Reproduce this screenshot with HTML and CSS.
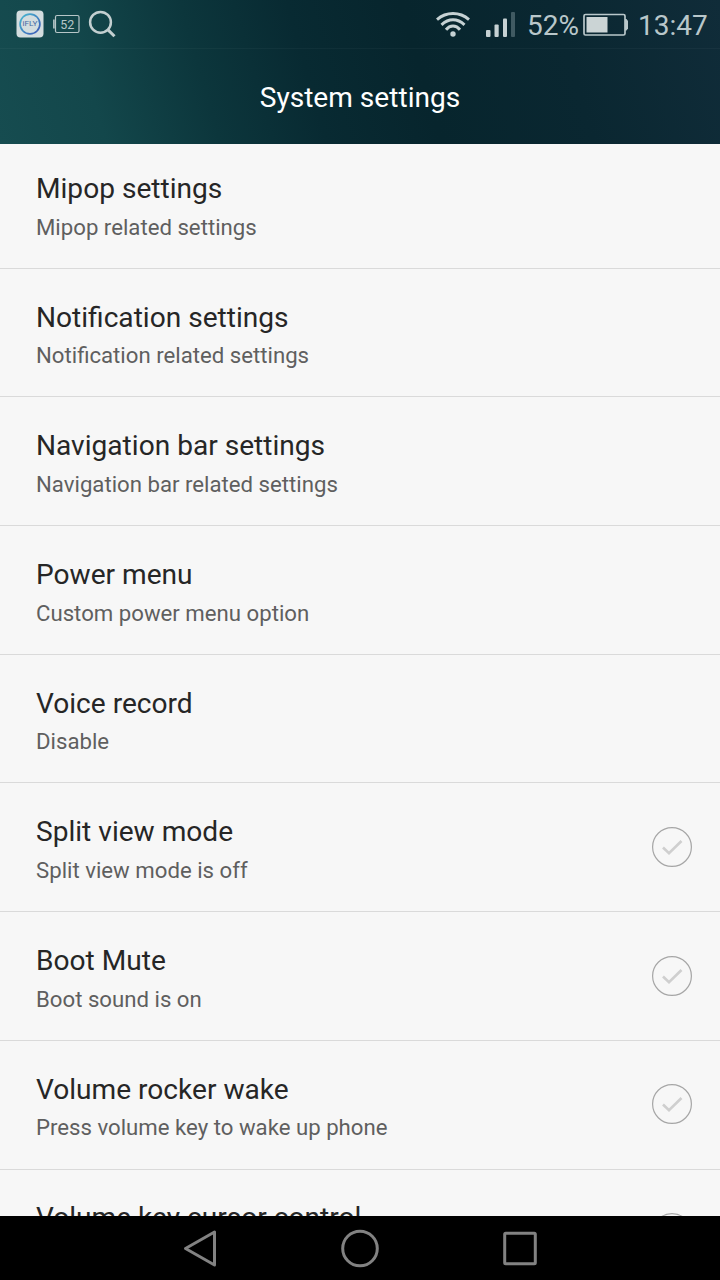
FILE: index.html
```html
<!DOCTYPE html>
<html lang="en">
<head>
<meta charset="utf-8">
<title>System settings</title>
<link rel="stylesheet" href="styles.css">
</head>
<body>
<div class="screen">
  <header class="header">
    <div class="status">
      <div class="notifications">
        <svg class="ifly" width="28" height="28" viewBox="0 0 28 28"><defs><linearGradient id="ring" x2="1" y2="1"><stop stop-color="#47b9d0"/><stop offset="1" stop-color="#3b56b5"/></linearGradient></defs><rect x=".5" y=".5" width="27" height="27" rx="4" fill="#d3dddf"/><circle cx="14" cy="14" r="9.9" fill="none" stroke="url(#ring)" stroke-width="1.7"/><text x="14" y="16.4" text-anchor="middle" textLength="15" lengthAdjust="spacingAndGlyphs" class="ifly-text">iFLY</text></svg>
        <svg class="level" width="28" height="20" viewBox="0 0 28 20"><path d="M4 1.5H24.5Q26 1.5 26 3V17Q26 18.500 24.500 18.500H4Q2.500 18.500 2.500 17V3Q2.500 1.500 4 1.500Z" fill="none" stroke="#b7c6c8" stroke-width="1.2"/><path d="M.9 5.500V14.500" stroke="#b7c6c8" stroke-width="1.600"/><text x="14.300" y="15" text-anchor="middle" class="level-text">52</text></svg>
        <svg class="search" width="28" height="28" viewBox="0 0 28 28" fill="none" stroke="#c3cfd0"><circle cx="12.500" cy="12.300" r="10.400" stroke-width="2.500"/><path d="M19.800 19.600L26.500 26.300" stroke-width="3"/></svg>
      </div>
      <div class="system">
        <svg class="wifi" width="34" height="26" viewBox="0 0 34 26" fill="none" stroke="#c6d1d3" stroke-width="3"><path d="M1 7.600Q8 1.600 17 1.600T33 7.600"/><path d="M5.500 12.800Q11 7.800 17 7.800T28.500 12.800"/><path d="M10 17.700Q13 14 17 14T24 17.700"/><circle cx="17" cy="22" r="2.700" fill="#c6d1d3" stroke="none"/></svg>
        <svg class="signal" width="30" height="26" viewBox="0 0 30 26" fill="#c6d1d3"><rect x="0" y="18" width="4.500" height="7" rx="1"/><rect x="8.500" y="12.500" width="4.200" height="12.500" rx="1"/><rect x="17" y="6.500" width="4" height="18.500" rx="1"/><rect x="25" y="0" width="4" height="25" rx="1" fill="#405a62"/></svg>
        <span class="percent">52%</span>
        <svg class="battery" width="46" height="24" viewBox="0 0 46 24"><rect x="1" y="1.500" width="41" height="20.500" rx="1.500" fill="none" stroke="#b9c7ca" stroke-width="1.700"/><rect x="3.500" y="4" width="21" height="15.500" fill="#cbd4d5"/><path d="M42 6H43.500L45 8V15.500L43.500 17.500H42Z" fill="#b9c7ca"/></svg>
        <span class="clock">13:47</span>
      </div>
    </div>
    <h1 class="heading">System settings</h1>
  </header>
  <main class="viewport">
    <ul class="list">
      <li class="row"><div><div class="title">Mipop settings</div><div class="sub">Mipop related settings</div></div></li>
      <li class="row"><div><div class="title">Notification settings</div><div class="sub">Notification related settings</div></div></li>
      <li class="row"><div><div class="title">Navigation bar settings</div><div class="sub">Navigation bar related settings</div></div></li>
      <li class="row"><div><div class="title">Power menu</div><div class="sub">Custom power menu option</div></div></li>
      <li class="row"><div><div class="title">Voice record</div><div class="sub">Disable</div></div></li>
      <li class="row"><div><div class="title">Split view mode</div><div class="sub">Split view mode is off</div></div><svg class="check" viewBox="0 0 42 42"><circle cx="21" cy="21" r="19.400"/><path d="M12 21.500L18 27.300L30.500 15"/></svg></li>
      <li class="row"><div><div class="title">Boot Mute</div><div class="sub">Boot sound is on</div></div><svg class="check" viewBox="0 0 42 42"><circle cx="21" cy="21" r="19.400"/><path d="M12 21.500L18 27.300L30.500 15"/></svg></li>
      <li class="row"><div><div class="title">Volume rocker wake</div><div class="sub">Press volume key to wake up phone</div></div><svg class="check" viewBox="0 0 42 42"><circle cx="21" cy="21" r="19.400"/><path d="M12 21.500L18 27.300L30.500 15"/></svg></li>
      <li class="row"><div><div class="title">Volume key cursor control</div></div><svg class="check" viewBox="0 0 42 42"><circle cx="21" cy="21" r="19.400"/><path d="M12 21.500L18 27.300L30.500 15"/></svg></li>
    </ul>
  </main>
  <nav class="nav">
    <svg width="40" height="40" viewBox="0 0 40 40"><path d="M5.500 20.500L34.500 4V37Z"/></svg>
    <svg width="40" height="40" viewBox="0 0 40 40"><circle cx="20" cy="20.500" r="17.300"/></svg>
    <svg width="40" height="40" viewBox="0 0 40 40"><rect x="4.700" y="5.200" width="30.600" height="30.600" rx="1"/></svg>
  </nav>
</div>
</body>
</html>
```
FILE: styles.css
```css
* { box-sizing: border-box; }
body { margin: 0; font-family: Roboto, sans-serif; }
svg { display: block; flex: none; }
.screen { width: 720px; height: 1280px; display: flex; flex-direction: column; overflow: hidden; background: #f7f7f7; }
.header { height: 144px; flex: none; background: linear-gradient(74deg, #164c50 0%, #13474b 14%, #0c363c 29%, #082a32 43%, #07252d 58%, #0a2731 78%, #102c39 100%); }
.status { height: 49px; display: flex; justify-content: space-between; border-bottom: 1px solid rgba(255,255,255,.035); }
.notifications, .system { display: flex; }
.notifications { padding-left: 16px; }
.ifly { margin-top: 10px; }
.ifly-text { font: 7px Roboto, sans-serif; fill: #466aa5; }
.level { margin: 14px 0 0 9px; }
.level-text { font: 12.500px Roboto, sans-serif; fill: #b7c6c8; }
.search { margin: 10px 0 0 7px; }
.system { padding-right: 12px; color: #b9c7ca; font-size: 28px; line-height: 52px; }
.wifi { margin: 12px 16px 0 0; }
.signal { margin: 12px 11px 0 0; }
.percent { width: 56px; white-space: nowrap; }
.battery { margin-top: 13px; }
.clock { width: 70px; margin-left: 9px; white-space: nowrap; }
.heading { height: 95px; margin: 0; color: #fff; font-size: 28.100px; font-weight: 400; line-height: 98px; text-align: center; }
.viewport { height: 1072px; flex: none; overflow: hidden; }
.list { margin: -4px 0 0; padding: 0; list-style: none; }
.row { height: 128.700px; display: flex; justify-content: space-between; padding: 30.900px 27px 0 36px; border-bottom: 1px solid #dadada; }
.title { color: #262626; font-size: 28.100px; line-height: 36px; white-space: nowrap; }
.sub { margin-top: 5.700px; color: #5f5f5f; font-size: 22.200px; line-height: 28px; white-space: nowrap; }
.check { width: 42px; height: 42px; margin-top: 11.600px; fill: none; stroke: #a6a6a6; stroke-width: 1.200px; }
.check path { stroke: #cfcfcf; stroke-width: 2.600px; }
.nav { height: 64px; flex: none; display: flex; justify-content: center; gap: 120px; padding-top: 12px; background: #000; }
.nav svg { fill: none; stroke: #828282; stroke-width: 3px; stroke-linejoin: round; }
```
